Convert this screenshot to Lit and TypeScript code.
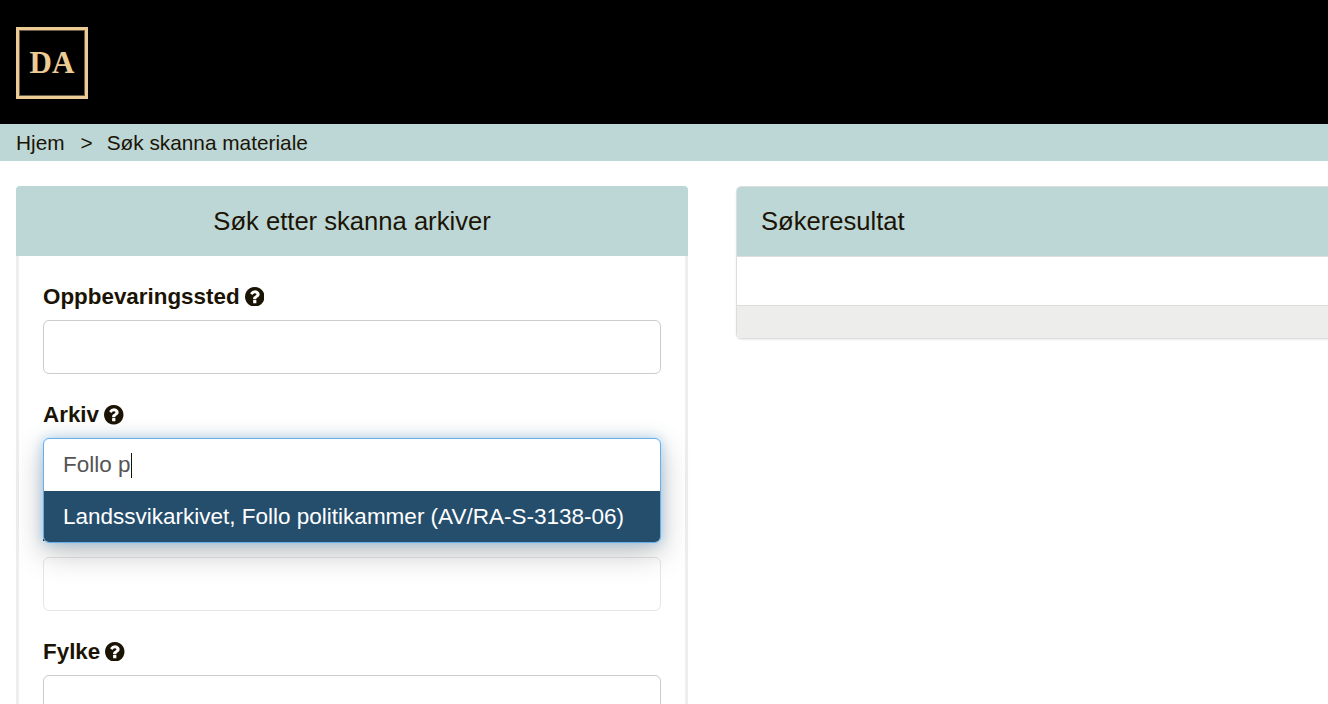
import { LitElement, html, css, svg } from "lit";
import { customElement } from "lit/decorators.js";

const Q = svg`<path d="M1024 1376v-192q0-14-9-23t-23-9h-192q-14 0-23 9t-9 23v192q0 14 9 23t23 9h192q14 0 23-9t9-23zm256-672q0-88-55.5-163t-138.5-116-170-41q-243 0-371 213-15 24 8 42l132 100q7 6 19 6 16 0 25-12 53-68 86-92 34-24 86-24 48 0 85.5 26t37.5 59q0 38-20 61t-68 45q-63 28-115.5 86.5t-52.5 125.5v36q0 14 9 23t23 9h192q14 0 23-9t9-23q0-19 21.5-49.5t54.5-49.5q32-18 49-28.5t46-35 44.5-48 28-60.5 12.5-81zm384 192q0 209-103 385.5t-279.5 279.5-385.5 103-385.5-103-279.5-279.5-103-385.5 103-385.5 279.5-279.5 385.5-103 385.5 103 279.5 279.5 103 385.5z"/>`;

@customElement("app-root")
export class AppRoot extends LitElement {
  static styles = css`
    :host { display: block; height: 704px; overflow: hidden; background: #fff; color: #1b1405; font-family: "Liberation Sans", Arial, sans-serif; }
    * { box-sizing: border-box; }
    .top { height: 124px; background: #000; display: flex; align-items: center; padding: 2px 16px 0; }
    .logo { width: 72px; height: 72px; border: 3px solid #edcb95; box-shadow: inset 0 0 0 1px rgba(237, 203, 149, .45); display: flex; align-items: center; justify-content: center; color: #edcb95; font: bold 31px "Liberation Serif", serif; }
    .crumb { height: 37px; background: #bdd7d7; display: flex; align-items: center; padding: 1px 16px 0; font-size: 20.8px; }
    .sep { margin: 0 14px 0 16px; }
    .cols { display: grid; grid-template-columns: 672px 672px; column-gap: 48px; padding: 25px 16px 0; }
    .head { height: 70px; background: #bdd7d7; border-radius: 4px 4px 0 0; display: flex; align-items: center; justify-content: center; font-size: 25.6px; }
    .body { border: solid #eeeeee; border-width: 0 3px; padding: 16px 24px 0; height: 460px; }
    .field { height: 118.4px; }
    label { display: flex; align-items: center; gap: 5px; height: 48px; padding-top: 1px; font-size: 22.4px; font-weight: bold; line-height: 47px; }
    label svg { width: 19.5px; height: 19.5px; fill: #1b1405; }
    label.covered { align-items: flex-start; padding-top: 30px; }
    .foot { width: 3px; height: 2px; background: #1b1405; }
    .input { height: 54px; border: 1px solid #cccccc; border-radius: 6px; background: #fff; }
    .input.faded { border-color: #e6e6e6; }
    .combo { position: relative; }
    .menu { position: absolute; z-index: 2; top: 0; left: 0; right: 0; height: 104.5px; border: 1px solid #66afe9; border-radius: 6px; background: #fff; box-shadow: 0 0 12px rgba(102, 175, 233, .5), 0 10px 30px rgba(0, 0, 0, .25); display: flex; flex-direction: column; overflow: hidden; }
    .text { height: 52px; display: flex; align-items: center; padding: 0 19px; font-size: 22.5px; color: #555; }
    .caret { display: inline-block; width: 1px; height: 25px; background: #1b1405; }
    .option { flex: 1; display: flex; align-items: center; padding: 0 19px; background: #254e6d; color: #fff; font-size: 22.5px; white-space: nowrap; }
    .result { border: 1px solid #dddddd; border-radius: 5px; overflow: hidden; box-shadow: 0 1px 2px rgba(0,0,0,.08); height: 153px; display: flex; flex-direction: column; }
    .result .head { justify-content: flex-start; padding: 0 24px; border-bottom: 1px solid #dddddd; border-radius: 0; }
    .rbody { height: 48px; }
    .rfoot { flex: 1; background: #ededeb; border-top: 1px solid #dddddd; }
  `;

  label(t: string) {
    return html`<label>${t}<svg viewBox="128 128 1536 1536">${Q}</svg></label>`;
  }

  render() {
    return html`
      <div class="top"><div class="logo">DA</div></div>
      <div class="crumb"><span>Hjem</span><span class="sep">&gt;</span><span>Søk skanna materiale</span></div>
      <div class="cols">
        <section>
          <div class="head">Søk etter skanna arkiver</div>
          <div class="body">
            <div class="field">${this.label("Oppbevaringssted")}<div class="input"></div></div>
            <div class="field">${this.label("Arkiv")}
              <div class="combo">
                <div class="menu">
                  <div class="text">Follo p<span class="caret"></span></div>
                  <div class="option">Landssvikarkivet, Follo politikammer (AV/RA-S-3138-06)</div>
                </div>
              </div>
            </div>
            <div class="field"><label class="covered"><span class="foot"></span></label><div class="input faded"></div></div>
            <div class="field">${this.label("Fylke")}<div class="input"></div></div>
          </div>
        </section>
        <section class="result">
          <div class="head">Søkeresultat</div>
          <div class="rbody"></div>
          <div class="rfoot"></div>
        </section>
      </div>
    `;
  }
}
